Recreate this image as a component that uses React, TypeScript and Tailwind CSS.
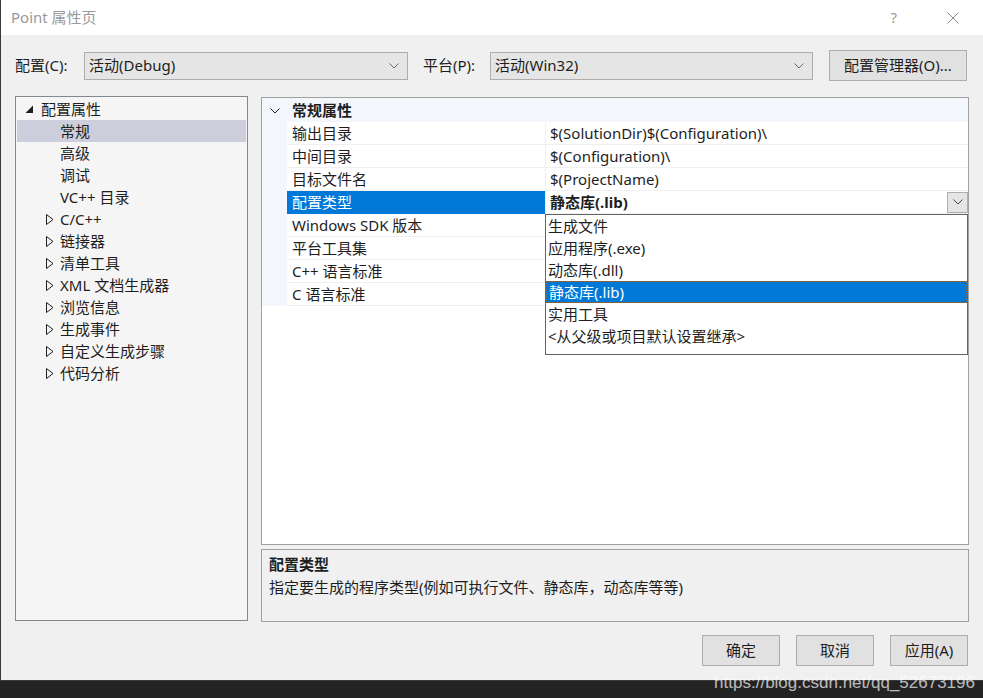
import React from 'react';

const font = 'font-["Segoe_UI","Noto_Sans","Noto_Sans_CJK_SC",sans-serif]';

const treeItems: { label: string; kind: 'root' | 'leaf' | 'node'; selected?: boolean }[] = [
  { label: '配置属性', kind: 'root' },
  { label: '常规', kind: 'leaf', selected: true },
  { label: '高级', kind: 'leaf' },
  { label: '调试', kind: 'leaf' },
  { label: 'VC++ 目录', kind: 'leaf' },
  { label: 'C/C++', kind: 'node' },
  { label: '链接器', kind: 'node' },
  { label: '清单工具', kind: 'node' },
  { label: 'XML 文档生成器', kind: 'node' },
  { label: '浏览信息', kind: 'node' },
  { label: '生成事件', kind: 'node' },
  { label: '自定义生成步骤', kind: 'node' },
  { label: '代码分析', kind: 'node' },
];

const props: { name: string; value: string; selected?: boolean }[] = [
  { name: '输出目录', value: '$(SolutionDir)$(Configuration)\\' },
  { name: '中间目录', value: '$(Configuration)\\' },
  { name: '目标文件名', value: '$(ProjectName)' },
  { name: '配置类型', value: '静态库(.lib)', selected: true },
  { name: 'Windows SDK 版本', value: '' },
  { name: '平台工具集', value: '' },
  { name: 'C++ 语言标准', value: '' },
  { name: 'C 语言标准', value: '' },
];

const options = ['生成文件', '应用程序(.exe)', '动态库(.dll)', '静态库(.lib)', '实用工具', '<从父级或项目默认设置继承>'];

function Chevron({ className = '' }: { className?: string }) {
  return (
    <svg width="10" height="6" viewBox="0 0 10 6" className={className}>
      <polyline points="0.5,0.5 5,5 9.5,0.5" fill="none" stroke="currentColor" strokeWidth="1" />
    </svg>
  );
}

function Combo({ value, width }: { value: string; width: string }) {
  return (
    <div
      className={`${width} flex h-[28px] items-center justify-between border border-[#adadad] bg-[#e5e5e5] pl-[4px] pr-[8px] text-[15px] text-[#1e1e1e]`}
    >
      <span>{value}</span>
      <Chevron className="text-[#6a6a6a]" />
    </div>
  );
}

function Button({ label, width }: { label: string; width: string }) {
  return (
    <div
      className={`${width} flex h-[31px] items-center justify-center border border-[#adadad] bg-[#e1e1e1] text-[15px] text-[#1e1e1e]`}
    >
      {label}
    </div>
  );
}

export default function App() {
  return (
    <div className={`relative flex h-[698px] w-[983px] flex-col overflow-hidden bg-[#232323] ${font}`}>
      <div className="flex h-[681px] flex-col border-b border-l border-[#3a3a3a] bg-[#f0f0f0]">
        {/* title bar */}
        <div className="flex h-[35px] shrink-0 items-center justify-between bg-white pl-[10px] pr-[24px] text-[15px] text-[#9a9a9a]">
          <span>Point 属性页</span>
          <div className="flex items-center gap-[50px]">
            <span className="text-[15px]">?</span>
            <svg width="12" height="12" viewBox="0 0 12 12">
              <path d="M0.5 0.5 L11.5 11.5 M11.5 0.5 L0.5 11.5" stroke="#8a8a8a" strokeWidth="1" />
            </svg>
          </div>
        </div>

        {/* config row */}
        <div className="mt-[15px] flex h-[31px] items-center pl-[14px] text-[15px] text-[#1e1e1e]">
          <span className="w-[69px]">配置(C):</span>
          <Combo value="活动(Debug)" width="w-[324px]" />
          <span className="ml-[15px] w-[67px]">平台(P):</span>
          <Combo value="活动(Win32)" width="w-[323px]" />
          <div className="ml-[16px]">
            <Button label="配置管理器(O)..." width="w-[138px]" />
          </div>
        </div>

        {/* main */}
        <div className="mt-[15px] flex pl-[14px]">
          <div className="h-[525px] w-[233px] border border-[#828790] bg-[#f5f5f5] pt-[1px] text-[15px] text-[#1e1e1e]">
            {treeItems.map((it) => (
              <div
                key={it.label}
                className={`mx-[1px] flex h-[22px] items-center ${it.selected ? 'bg-[#cccedb]' : ''}`}
              >
                {it.kind === 'root' && (
                  <>
                    <svg width="9" height="9" viewBox="0 0 9 9" className="ml-[8px]">
                      <polygon points="8,0.5 8,8 0.5,8" fill="#1e1e1e" />
                    </svg>
                    <span className="ml-[7px]">{it.label}</span>
                  </>
                )}
                {it.kind === 'node' && (
                  <>
                    <svg width="8" height="11" viewBox="0 0 8 11" className="ml-[29px]">
                      <polygon points="0.5,0.5 7,5.5 0.5,10.5" fill="none" stroke="#1e1e1e" strokeWidth="1" />
                    </svg>
                    <span className="ml-[6px]">{it.label}</span>
                  </>
                )}
                {it.kind === 'leaf' && <span className="ml-[43px]">{it.label}</span>}
              </div>
            ))}
          </div>

          <div className="ml-[13px] flex w-[708px] flex-col">
            {/* property grid */}
            <div className="relative mt-[1px] h-[448px] border border-[#a0a0a0] bg-white text-[15px] text-[#1e1e1e]">
              <div className="flex h-[24px] items-center bg-[#f3f6fb] pt-[1px]">
                <Chevron className="ml-[8px] text-[#1e1e1e]" />
                <span className="ml-[12px] font-bold">常规属性</span>
              </div>
              {props.map((p) => (
                <div key={p.name} className="flex h-[23px]">
                  <div className="w-[25px] bg-[#f3f6fb]" />
                  <div
                    className={`flex w-[258px] items-center border-b pl-[5px] pt-[1px] ${
                      p.selected ? 'border-[#0078d7] bg-[#0078d7] text-white' : 'border-[#f0f0f0]'
                    }`}
                  >
                    {p.name}
                  </div>
                  <div className="flex flex-1 items-center justify-between border-b border-l border-[#f0f0f0] pl-[4px]">
                    <span className={`pt-[1px] ${p.selected ? 'font-bold' : ''}`}>{p.value}</span>
                    {p.selected && (
                      <div className="flex h-[21px] w-[21px] items-center justify-center border border-[#adadad] bg-[#e5e5e5]">
                        <Chevron className="text-[#444]" />
                      </div>
                    )}
                  </div>
                </div>
              ))}

              {/* dropdown list */}
              <div className="absolute left-[283px] top-[116px] h-[141px] w-[423px] border border-[#646464] bg-white">
                {options.map((o, i) => (
                  <div
                    key={o}
                    className={`flex h-[22px] items-center pl-[2px] pt-[1px] ${
                      i === 3 ? 'border border-dotted border-[#8a6a40] bg-[#0078d7] pl-[1px] text-white' : ''
                    }`}
                  >
                    {o}
                  </div>
                ))}
              </div>
            </div>

            {/* description */}
            <div className="mt-[4px] h-[73px] border border-[#a0a0a0] bg-[#f0f0f0] px-[7px] pt-[3px] text-[15px] text-[#1e1e1e]">
              <div className="h-[21px] font-bold">配置类型</div>
              <div className="mt-[2px]">指定要生成的程序类型(例如可执行文件、静态库，动态库等等)</div>
            </div>
          </div>
        </div>

        {/* buttons */}
        <div className="mt-[13px] flex justify-end gap-[16px] pr-[15px]">
          <Button label="确定" width="w-[78px]" />
          <Button label="取消" width="w-[78px]" />
          <Button label="应用(A)" width="w-[78px]" />
        </div>
      </div>

      <div className="absolute bottom-[3px] right-[8px] font-['Liberation_Sans',sans-serif] text-[17px] text-white/70">
        https://blog.csdn.net/qq_52673196
      </div>
    </div>
  );
}
